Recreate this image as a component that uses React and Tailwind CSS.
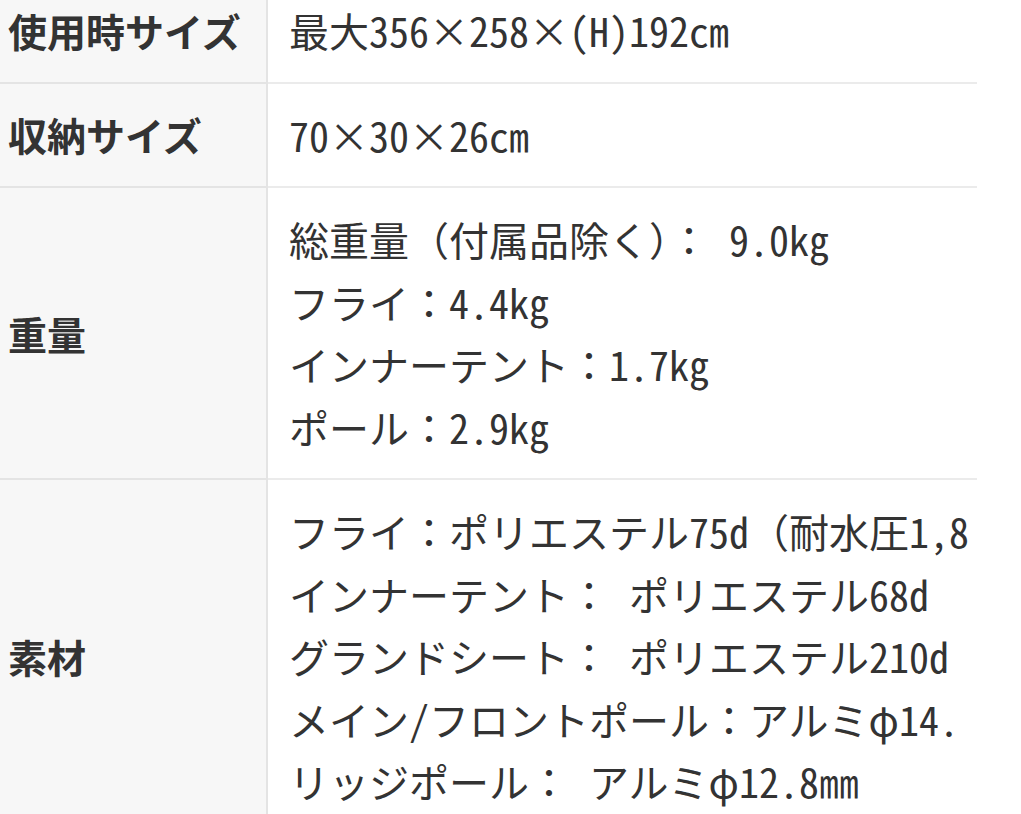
import React from "react";

const rows = [
  { label: "使用時サイズ", lines: ["最大356×258×(H)192㎝"] },
  { label: "収納サイズ", lines: ["70×30×26㎝"] },
  {
    label: "重量",
    lines: ["総重量（付属品除く）： 9.0kg", "フライ：4.4kg", "インナーテント：1.7kg", "ポール：2.9kg"],
  },
  {
    label: "素材",
    lines: [
      "フライ：ポリエステル75d（耐水圧1,8",
      "インナーテント： ポリエステル68d",
      "グランドシート： ポリエステル210d",
      "メイン/フロントポール：アルミφ14.",
      "リッジポール： アルミφ12.8㎜",
    ],
  },
];

function Line({ text }) {
  const parts = text.split(/([\x20-\x7E]+)/).filter(Boolean);
  return (
    <div>
      {parts.map((p, k) =>
        /^[\x20-\x7E]+$/.test(p) ? (
          <span key={k} className="whitespace-pre [font-feature-settings:'hwid']">
            {p}
          </span>
        ) : (
          <span key={k}>{p}</span>
        )
      )}
    </div>
  );
}

export default function App() {
  return (
    <div className="h-[814px] w-[1021px] overflow-hidden bg-white text-[#333] [font-family:'Noto_Sans_CJK_JP',sans-serif]">
      <div className="-mt-[21px] w-[977px] overflow-hidden">
        {rows.map((r, i) => (
          <div key={i} className="flex">
            <div className="flex w-[268px] shrink-0 items-center border-r-2 border-b-2 border-[#e4e4e4] bg-[#f7f7f7] pl-2 text-[39px] font-bold leading-none">
              {r.label}
            </div>
            <div className="min-w-0 flex-1 border-b-2 border-[#ebebeb] px-[21px] py-5 text-[40px] leading-[62.5px] whitespace-nowrap">
              {r.lines.map((l, j) => (
                <Line key={j} text={l} />
              ))}
            </div>
          </div>
        ))}
      </div>
    </div>
  );
}
